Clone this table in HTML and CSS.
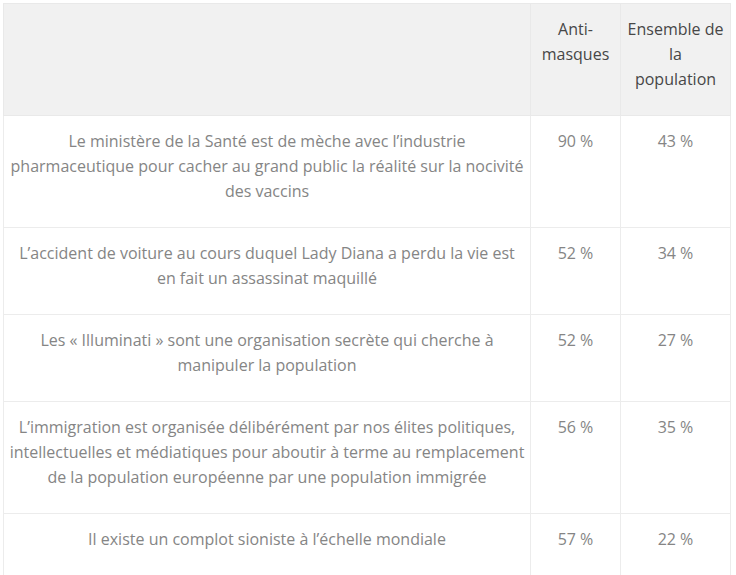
FILE: index.html
```html
<!DOCTYPE html>
<html lang="fr">
<head>
<meta charset="utf-8">
<link rel="stylesheet" href="styles.css">
</head>
<body>
<div class="wrap">
<table class="poll">
  <colgroup>
    <col class="c-q">
    <col class="c-a">
    <col class="c-b">
  </colgroup>
  <thead>
    <tr>
      <th></th>
      <th>Anti-masques</th>
      <th>Ensemble de la population</th>
    </tr>
  </thead>
  <tbody>
    <tr>
      <td>Le ministère de la Santé est de mèche avec l’industrie pharmaceutique pour cacher au grand public la réalité sur la nocivité des vaccins</td>
      <td>90 %</td>
      <td>43 %</td>
    </tr>
    <tr>
      <td>L’accident de voiture au cours duquel Lady Diana a perdu la vie est en fait un assassinat maquillé</td>
      <td>52 %</td>
      <td>34 %</td>
    </tr>
    <tr>
      <td>Les « Illuminati » sont une organisation secrète qui cherche à manipuler la population</td>
      <td>52 %</td>
      <td>27 %</td>
    </tr>
    <tr>
      <td>L’immigration est organisée délibérément par nos élites politiques, intellectuelles et médiatiques pour aboutir à terme au remplacement de la population européenne par une population immigrée</td>
      <td>56 %</td>
      <td>35 %</td>
    </tr>
    <tr>
      <td>Il existe un complot sioniste à l’échelle mondiale</td>
      <td>57 %</td>
      <td>22 %</td>
    </tr>
  </tbody>
</table>
</div>
</body>
</html>
```

FILE: styles.css
```css
html, body {
  margin: 0;
  padding: 0;
  background: #ffffff;
}
.wrap {
  padding: 3px;
}
.poll {
  width: 727px;
  border-collapse: collapse;
  table-layout: fixed;
  font-family: "Open Sans", "Liberation Sans", sans-serif;
  font-size: 16px;
  line-height: 25px;
  color: #858585;
}
.poll th,
.poll td {
  border: 1px solid #ececec;
  padding: 13px 6px 23px;
  text-align: center;
  vertical-align: top;
  font-weight: normal;
}
.poll th:first-child,
.poll td:first-child {
  padding-left: 4px;
  padding-right: 4px;
}
.poll thead th {
  background: #f1f1f1;
  color: #474747;
  border-color: #e9e9e9;
}
.c-q { width: 527px; }
.c-a { width: 90px; }
.c-b { width: 110px; }
```
